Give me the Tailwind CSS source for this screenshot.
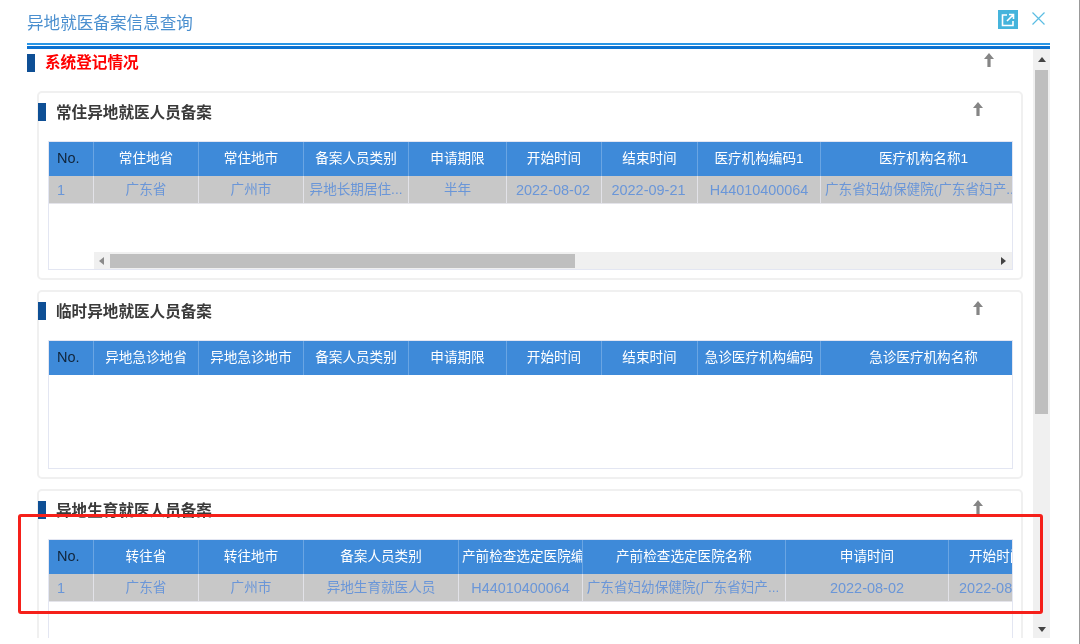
<!DOCTYPE html>
<html lang="en">
<head>
<meta charset="UTF-8">
<title>异地就医备案信息查询</title>
<script src="https://cdn.jsdelivr.net/npm/@tailwindcss/browser@4"></script>
</head>
<body class="bg-white">
<div class="relative w-[1080px] h-[644px] overflow-hidden bg-white border-r border-[#999] font-['Liberation_Sans','Noto_Sans_CJK_SC',sans-serif] text-[13.6px] blur-[0.35px]">

  <!-- Dialog title -->
  <div class="ml-[27px] w-[1023px] h-[43px] flex items-start justify-between">
    <h1 class="mt-[12px] text-[16.6px] leading-[24px] text-[#4a8fcf]">异地就医备案信息查询</h1>
    <div class="flex items-start mr-[5px] mt-[10px] gap-[14px]">
      <span class="w-[20px] h-[19px] bg-[#45b4dc] flex items-center justify-center">
        <svg class="w-[14px] h-[14px]" viewBox="0 0 14 14" fill="none" stroke="#fff" stroke-width="1.6"><path d="M6 2H1.5v10.5H12V8M8 1.5h4.5V6M12.3 1.7 6 8"/></svg>
      </span>
      <svg class="w-[13px] h-[13px] mt-[2px]" viewBox="0 0 13 13" fill="none" stroke="#5bbde3" stroke-width="1.2"><path d="M.5.5l12 12M12.5.5l-12 12"/></svg>
    </div>
  </div>
  <div class="ml-[27px] w-[1023px] h-[6px] border-t-2 border-b-[3px] border-t-[#2a96e6] border-b-[#0d72d0]"></div>

  <div class="ml-[27px] w-[1023px] flex">
    <!-- Scrolling content -->
    <main class="w-[1006px] h-[589px] overflow-hidden">
      <div class="h-[42px] flex items-start justify-between pr-[38px]">
        <div class="mt-[5px] flex items-center h-[18px]">
          <span class="w-[8px] h-[18px] bg-[#0e4f95]"></span>
          <h2 class="ml-[10px] text-[15.6px] font-bold text-[#ff0000] leading-[18px]">系统登记情况</h2>
        </div>
        <svg class="w-[12px] h-[14px] mt-[4px]" viewBox="0 0 12 14" fill="#858585"><path d="M6 0 11 6H7.6v8H4.4V6H1z"/></svg>
      </div>

      <!-- Card 1 -->
      <section class="ml-[10px] w-[986px] h-[189px] border-2 border-[#f0f0f0] rounded-[5px] pt-[10px]">
        <div class="flex items-start justify-between h-[38px] pr-[37px] -ml-px">
          <div class="flex items-center h-[18px]">
            <span class="w-[8px] h-[18px] bg-[#0e4f95]"></span>
            <h3 class="ml-[10px] mt-[2px] text-[15.6px] font-bold text-[#3a3a3a] leading-[18px]">常住异地就医人员备案</h3>
          </div>
          <svg class="w-[12px] h-[14px] -mt-[1px]" viewBox="0 0 12 14" fill="#858585"><path d="M6 0 11 6H7.6v8H4.4V6H1z"/></svg>
        </div>
        <div class="ml-[9px] w-[965px] h-[129px] border border-[#e3e6f2] overflow-hidden relative">
          <div class="flex h-[34px] bg-[#3e8ad9] text-white text-center leading-[33px]">
            <div class="w-[45px] shrink-0 border-r border-[#6aa5e3] text-[#10243a] text-left pl-[8px] text-[14.5px]">No.</div>
            <div class="w-[105px] shrink-0 border-r border-[#6aa5e3]">常住地省</div>
            <div class="w-[105px] shrink-0 border-r border-[#6aa5e3]">常住地市</div>
            <div class="w-[105px] shrink-0 border-r border-[#6aa5e3]">备案人员类别</div>
            <div class="w-[98px] shrink-0 border-r border-[#6aa5e3]">申请期限</div>
            <div class="w-[95px] shrink-0 border-r border-[#6aa5e3]">开始时间</div>
            <div class="w-[96px] shrink-0 border-r border-[#6aa5e3]">结束时间</div>
            <div class="w-[123px] shrink-0 border-r border-[#6aa5e3]">医疗机构编码1</div>
            <div class="flex-1 pl-[14px]">医疗机构名称1</div>
          </div>
          <div class="flex h-[28px] bg-[#c8c8c8] border-b border-[#e4e4ea] text-[#6a96d8] text-center leading-[28px] whitespace-nowrap">
            <div class="w-[45px] shrink-0 border-r border-[#e2e2e8] text-left pl-[8px] text-[14.5px]">1</div>
            <div class="w-[105px] shrink-0 border-r border-[#e2e2e8]">广东省</div>
            <div class="w-[105px] shrink-0 border-r border-[#e2e2e8]">广州市</div>
            <div class="w-[105px] shrink-0 border-r border-[#e2e2e8]">异地长期居住...</div>
            <div class="w-[98px] shrink-0 border-r border-[#e2e2e8]">半年</div>
            <div class="w-[95px] shrink-0 border-r border-[#e2e2e8] text-[14.5px] pr-[2px]">2022-08-02</div>
            <div class="w-[96px] shrink-0 border-r border-[#e2e2e8] text-[14.5px] pr-[2px]">2022-09-21</div>
            <div class="w-[123px] shrink-0 border-r border-[#e2e2e8] text-[14.4px]">H44010400064</div>
            <div class="flex-1 overflow-hidden text-left pl-[4px]">广东省妇幼保健院(广东省妇产...</div>
          </div>
          <!-- Horizontal scrollbar -->
          <div class="absolute left-[45px] right-0 bottom-0 h-[17px] bg-[#f0f0f0] flex items-center">
            <svg class="ml-[5px] w-[5px] h-[8px]" viewBox="0 0 5 8" fill="#8a8a8a"><path d="M5 0v8L0 4z"/></svg>
            <div class="ml-[6px] w-[465px] h-[14px] bg-[#bfbfbf]"></div>
            <svg class="ml-auto mr-[6px] w-[5px] h-[8px]" viewBox="0 0 5 8" fill="#444"><path d="M0 0v8l5-4z"/></svg>
          </div>
        </div>
      </section>

      <!-- Card 2 -->
      <section class="mt-[10px] ml-[10px] w-[986px] h-[189px] border-2 border-[#f0f0f0] rounded-[5px] pt-[10px]">
        <div class="flex items-start justify-between h-[38px] pr-[37px] -ml-px">
          <div class="flex items-center h-[18px]">
            <span class="w-[8px] h-[18px] bg-[#0e4f95]"></span>
            <h3 class="ml-[10px] mt-[2px] text-[15.6px] font-bold text-[#3a3a3a] leading-[18px]">临时异地就医人员备案</h3>
          </div>
          <svg class="w-[12px] h-[14px] -mt-[1px]" viewBox="0 0 12 14" fill="#858585"><path d="M6 0 11 6H7.6v8H4.4V6H1z"/></svg>
        </div>
        <div class="ml-[9px] w-[965px] h-[129px] border border-[#e3e6f2] overflow-hidden">
          <div class="flex h-[34px] bg-[#3e8ad9] text-white text-center leading-[33px]">
            <div class="w-[45px] shrink-0 border-r border-[#6aa5e3] text-[#10243a] text-left pl-[8px] text-[14.5px]">No.</div>
            <div class="w-[105px] shrink-0 border-r border-[#6aa5e3]">异地急诊地省</div>
            <div class="w-[105px] shrink-0 border-r border-[#6aa5e3]">异地急诊地市</div>
            <div class="w-[105px] shrink-0 border-r border-[#6aa5e3]">备案人员类别</div>
            <div class="w-[98px] shrink-0 border-r border-[#6aa5e3]">申请期限</div>
            <div class="w-[95px] shrink-0 border-r border-[#6aa5e3]">开始时间</div>
            <div class="w-[96px] shrink-0 border-r border-[#6aa5e3]">结束时间</div>
            <div class="w-[123px] shrink-0 border-r border-[#6aa5e3]">急诊医疗机构编码</div>
            <div class="flex-1 pl-[14px]">急诊医疗机构名称</div>
          </div>
        </div>
      </section>

      <!-- Card 3 -->
      <section class="mt-[10px] ml-[10px] w-[986px] h-[189px] border-2 border-[#f0f0f0] rounded-[5px] pt-[10px]">
        <div class="flex items-start justify-between h-[38px] pr-[37px] -ml-px">
          <div class="flex items-center h-[18px]">
            <span class="w-[8px] h-[18px] bg-[#0e4f95]"></span>
            <h3 class="ml-[10px] mt-[2px] text-[15.6px] font-bold text-[#3a3a3a] leading-[18px]">异地生育就医人员备案</h3>
          </div>
          <svg class="w-[12px] h-[14px] -mt-[1px]" viewBox="0 0 12 14" fill="#858585"><path d="M6 0 11 6H7.6v8H4.4V6H1z"/></svg>
        </div>
        <div class="ml-[9px] w-[965px] h-[129px] border border-[#e3e6f2] overflow-hidden">
          <div class="flex h-[34px] bg-[#3e8ad9] text-white text-center leading-[33px] whitespace-nowrap">
            <div class="w-[45px] shrink-0 border-r border-[#6aa5e3] text-[#10243a] text-left pl-[8px] text-[14.5px]">No.</div>
            <div class="w-[105px] shrink-0 border-r border-[#6aa5e3]">转往省</div>
            <div class="w-[105px] shrink-0 border-r border-[#6aa5e3]">转往地市</div>
            <div class="w-[155px] shrink-0 border-r border-[#6aa5e3]">备案人员类别</div>
            <div class="w-[124px] shrink-0 border-r border-[#6aa5e3] overflow-hidden text-left pl-[3px]">产前检查选定医院编码</div>
            <div class="w-[203px] shrink-0 border-r border-[#6aa5e3]">产前检查选定医院名称</div>
            <div class="w-[163px] shrink-0 border-r border-[#6aa5e3]">申请时间</div>
            <div class="flex-1 overflow-hidden text-left pl-[20px]">开始时间</div>
          </div>
          <div class="flex h-[28px] bg-[#c8c8c8] border-b border-[#e4e4ea] text-[#6a96d8] text-center leading-[28px] whitespace-nowrap">
            <div class="w-[45px] shrink-0 border-r border-[#e2e2e8] text-left pl-[8px] text-[14.5px]">1</div>
            <div class="w-[105px] shrink-0 border-r border-[#e2e2e8]">广东省</div>
            <div class="w-[105px] shrink-0 border-r border-[#e2e2e8]">广州市</div>
            <div class="w-[155px] shrink-0 border-r border-[#e2e2e8]">异地生育就医人员</div>
            <div class="w-[124px] shrink-0 border-r border-[#e2e2e8] text-[14.4px]">H44010400064</div>
            <div class="w-[203px] shrink-0 border-r border-[#e2e2e8] pr-[2px]">广东省妇幼保健院(广东省妇产...</div>
            <div class="w-[163px] shrink-0 border-r border-[#e2e2e8] text-[14.5px]">2022-08-02</div>
            <div class="flex-1 overflow-hidden text-left pl-[10px] text-[14.5px]">2022-08-02</div>
          </div>
        </div>
      </section>
    </main>

    <!-- Vertical scrollbar -->
    <aside class="w-[17px] h-[589px] bg-[#f0f0f0] flex flex-col items-center">
      <svg class="mt-[8px] w-[8px] h-[5px] shrink-0" viewBox="0 0 8 5" fill="#444"><path d="M4 0l4 5H0z"/></svg>
      <div class="mt-[8px] w-[13px] h-[344px] bg-[#bfbfbf] shrink-0"></div>
      <svg class="mt-auto mb-[6px] w-[8px] h-[5px] shrink-0" viewBox="0 0 8 5" fill="#444"><path d="M4 5l4-5H0z"/></svg>
    </aside>
  </div>

  <!-- Red highlight drawn over the screenshot -->
  <div class="absolute left-[18px] top-[514px] w-[1025px] h-[100px] border-[3px] border-[#f5201a] rounded-[3px]"></div>
</div>
</body>
</html>
